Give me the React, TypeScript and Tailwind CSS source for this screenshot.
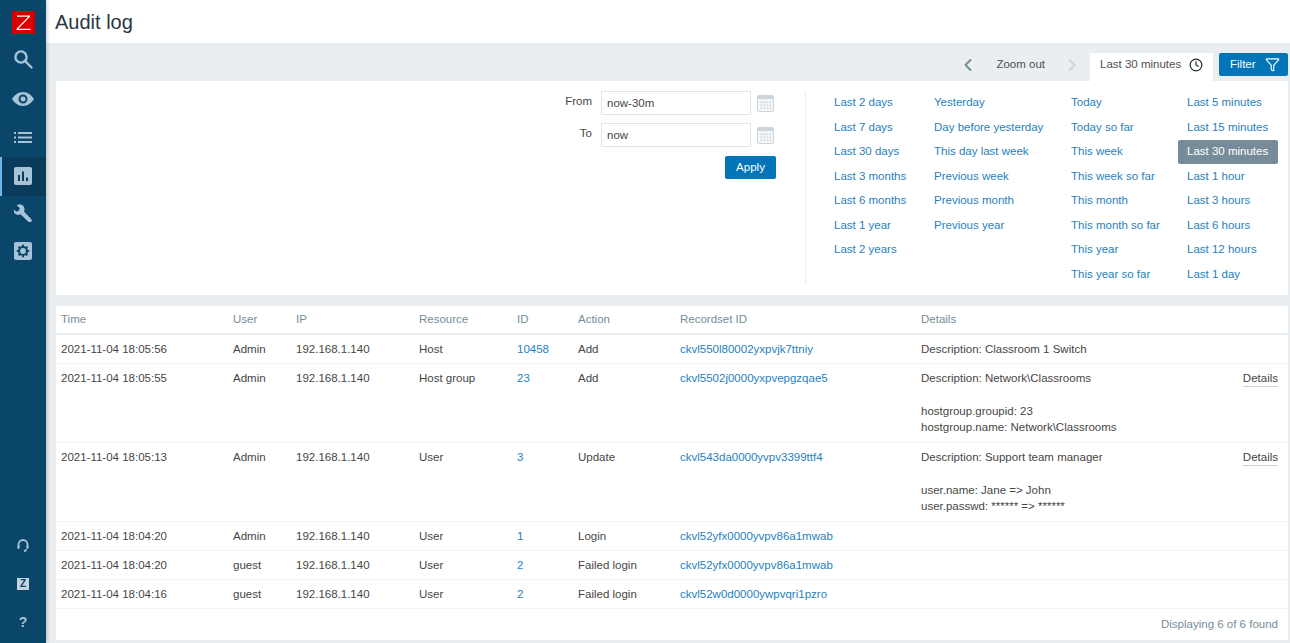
import { ChevronLeft, ChevronRight, Clock, Filter } from "lucide-react";

const columns = [
  ["Last 2 days", "Last 7 days", "Last 30 days", "Last 3 months", "Last 6 months", "Last 1 year", "Last 2 years"],
  ["Yesterday", "Day before yesterday", "This day last week", "Previous week", "Previous month", "Previous year"],
  ["Today", "Today so far", "This week", "This week so far", "This month", "This month so far", "This year", "This year so far"],
  ["Last 5 minutes", "Last 15 minutes", "Last 30 minutes", "Last 1 hour", "Last 3 hours", "Last 6 hours", "Last 12 hours", "Last 1 day"],
];

const columnClasses = ["w-[100px]", "w-[137px]", "w-[116px]", "w-[100px]"];

const rows = [
  { time: "2021-11-04 18:05:56", user: "Admin", ip: "192.168.1.140", resource: "Host", id: "10458", action: "Add", recordset: "ckvl550l80002yxpvjk7ttniy", desc: "Description: Classroom 1 Switch" },
  { time: "2021-11-04 18:05:55", user: "Admin", ip: "192.168.1.140", resource: "Host group", id: "23", action: "Add", recordset: "ckvl5502j0000yxpvepgzqae5", desc: "Description: Network\\Classrooms", extra: ["hostgroup.groupid: 23", "hostgroup.name: Network\\Classrooms"] },
  { time: "2021-11-04 18:05:13", user: "Admin", ip: "192.168.1.140", resource: "User", id: "3", action: "Update", recordset: "ckvl543da0000yvpv3399ttf4", desc: "Description: Support team manager", extra: ["user.name: Jane => John", "user.passwd: ****** => ******"] },
  { time: "2021-11-04 18:04:20", user: "Admin", ip: "192.168.1.140", resource: "User", id: "1", action: "Login", recordset: "ckvl52yfx0000yvpv86a1mwab" },
  { time: "2021-11-04 18:04:20", user: "guest", ip: "192.168.1.140", resource: "User", id: "2", action: "Failed login", recordset: "ckvl52yfx0000yvpv86a1mwab" },
  { time: "2021-11-04 18:04:16", user: "guest", ip: "192.168.1.140", resource: "User", id: "2", action: "Failed login", recordset: "ckvl52w0d0000ywpvqri1pzro" },
];

const gridCols = "grid grid-cols-[172px_63px_123px_98px_61px_102px_241px_1fr]";

const CalendarIcon = () => (
  <svg width="17" height="17" viewBox="0 0 17 17">
    <rect x="0.5" y="0.5" width="16" height="16" rx="1" fill="#f4f5f6" stroke="#ccd5db" />
    <rect x="1" y="1" width="15" height="3" fill="#ccd5db" />
    {[4, 7, 10, 13].map((x) =>
      [7, 10, 13].map((y) => <rect key={`${x}-${y}`} x={x - 0.5} y={y - 0.5} width="1.5" height="1.5" fill="#ccd5db" />)
    )}
  </svg>
);

const NavIcon = ({ children, active, className = "" }: { children: React.ReactNode; active?: boolean; className?: string }) => (
  <div className={`relative h-[38px] flex items-center justify-center ${active ? "bg-[#0a3b5a]" : ""} ${className}`}>
    {active && <div className="absolute left-0 top-0 bottom-0 w-[2px] bg-[#69b9f0]" />}
    {children}
  </div>
);

const Sidebar = () => (
  <aside className="w-[46px] shrink-0 h-[643px] bg-[#0a466a] flex flex-col pb-[2px] shadow-[2px_0_3px_rgba(0,0,0,0.15)] z-10">
    <div className="h-[40px] flex items-end justify-center pb-[6px]">
      <svg width="23" height="23" viewBox="0 0 23 23">
        <rect width="23" height="23" fill="#d40000" />
        <path d="M5 4.500h13v1.200L6.300 17.800H18.500v1.200H4.500v-1.200L16.200 5.700H5z" fill="#ffffff" />
      </svg>
    </div>
    <NavIcon className="mb-[2px]">
      <svg width="20" height="20" viewBox="0 0 20 20" fill="none" stroke="#a7c3d6" strokeWidth="2.400">
        <circle cx="8" cy="8" r="5.600" />
        <path d="M12.200 12.200L18.500 18.500" strokeLinecap="round" />
      </svg>
    </NavIcon>
    <NavIcon>
      <svg width="22" height="14" viewBox="0 0 22 14">
        <path fillRule="evenodd" d="M11 0c5 0 9 3.500 11 7-2 3.500-6 7-11 7S2 10.500 0 7c2-3.500 6-7 11-7zm0 2.500a4.500 4.500 0 100 9 4.500 4.500 0 000-9zm0 2a2.500 2.500 0 110 5 2.500 2.500 0 010-5z" fill="#a7c3d6" />
      </svg>
    </NavIcon>
    <NavIcon>
      <svg width="18" height="11" viewBox="0 0 18 11" fill="#a7c3d6">
        <rect x="0" y="0" width="2" height="2" />
        <rect x="0" y="4.500" width="2" height="2" />
        <rect x="0" y="9" width="2" height="2" />
        <rect x="4" y="0" width="14" height="2" />
        <rect x="4" y="4.500" width="14" height="2" />
        <rect x="4" y="9" width="14" height="2" />
      </svg>
    </NavIcon>
    <NavIcon active className="!h-[39px] mt-[1px] -mb-[1px] pb-[2px]">
      <svg width="18" height="18" viewBox="0 0 18 18">
        <rect width="18" height="18" rx="2" fill="#a7c3d6" />
        <rect x="4" y="8" width="2" height="6" fill="#0a3b5a" />
        <rect x="8" y="4.500" width="2" height="9.500" fill="#0a3b5a" />
        <rect x="12" y="10.500" width="2" height="3.500" fill="#0a3b5a" />
      </svg>
    </NavIcon>
    <NavIcon className="mt-[-1px]">
      <svg width="18" height="18" viewBox="0 0 18 18" fill="#a7c3d6">
        <path d="M6 0.300a5 5 0 00-3.200 1l3 3-1 2.500-2.500 1-3-3A5 5 0 006.500 10.300L14.300 17.700a1.800 1.800 0 002.900-2.600L10 7.500A5 5 0 006 0.300z" />
      </svg>
    </NavIcon>
    <NavIcon>
      <svg width="18" height="18" viewBox="0 0 18 18">
        <rect width="18" height="18" rx="2" fill="#a7c3d6" />
        <circle cx="9" cy="9" r="4" fill="none" stroke="#0a466a" strokeWidth="2.200" />
        <path d="M9 2.800v2M9 13.200v2M2.800 9h2M13.200 9h2M4.600 4.600l1.500 1.500M11.900 11.900l1.500 1.500M4.600 13.400l1.500-1.500M11.900 6.100l1.500-1.500" stroke="#0a466a" strokeWidth="2" />
      </svg>
    </NavIcon>
    <div className="flex-1" />
    <NavIcon className="pb-[2px]">
      <svg width="12" height="13" viewBox="0 0 12 13" fill="none" stroke="#a7c3d6" strokeWidth="1.800">
        <path d="M1.500 8V5.500a4.500 4.500 0 019 0V8" />
        <rect x="0.500" y="6.500" width="2" height="3.500" rx="0.800" fill="#a7c3d6" stroke="none" />
        <rect x="9.500" y="6.500" width="2" height="3.500" rx="0.800" fill="#a7c3d6" stroke="none" />
        <path d="M9.500 10.500c-.5 1-1.500 1.500-2.500 1.500" />
      </svg>
    </NavIcon>
    <NavIcon>
      <div className="w-[12px] h-[12px] bg-[#c3d4e0] text-[#0a466a] text-[10px] font-bold leading-[12px] text-center">Z</div>
    </NavIcon>
    <NavIcon>
      <span className="text-[#a7c3d6] text-[14px] font-bold">?</span>
    </NavIcon>
  </aside>
);

export default function App() {
  return (
    <div className="flex w-[1290px] h-[643px] overflow-hidden bg-[#ebeef0] text-[11.5px] text-[#464646] font-['Liberation_Sans',Arial,sans-serif]">
      <Sidebar />
      <main className="flex-1 min-w-0 flex flex-col">
        <header className="h-[43px] bg-white pl-[9px] flex items-center">
          <h1 className="text-[20px] text-[#2a3640] font-normal">Audit log</h1>
        </header>

        <div className="h-[38px] flex items-end justify-end pr-[2px]">
          <div className="flex items-start h-[28px] text-[#4f4f4f]">
            <div className="flex items-center h-[23px]">
              <ChevronLeft size={20} strokeWidth={2.500} className="text-[#768d99] mr-[18px]" />
              <span>Zoom out</span>
              <ChevronRight size={20} strokeWidth={2.500} className="text-[#cdd5da] ml-[17px] mr-[8px]" />
            </div>
            <div className="h-[28px] w-[123px] bg-white pl-[10px] mr-[6px]">
              <div className="h-[23px] flex items-center gap-[8px]">
                <span>Last 30 minutes</span>
                <Clock size={14} strokeWidth={2} className="text-[#1f2c33]" />
              </div>
            </div>
            <button className="h-[23px] w-[69px] bg-[#0275b8] text-white rounded-[2px] flex items-center pl-[11px] gap-[9px]">
              Filter
              <Filter size={15} strokeWidth={1.800} />
            </button>
          </div>
        </div>

        <section className="ml-[10px] mr-[2px] h-[214px] bg-white flex shrink-0">
          <div className="flex-1 flex justify-end">
            <div className="w-[240px] mr-[9px] pt-[10px]">
              <div className="flex items-center h-[24px] mb-[8px]">
                <label className="w-[36px] text-right mr-[9px] relative top-[-1px]">From</label>
                <div className="w-[150px] h-[24px] border border-[#dfe4e7] pl-[5px] leading-[22px] bg-white">now-30m</div>
                <div className="ml-[6px]"><CalendarIcon /></div>
              </div>
              <div className="flex items-center h-[24px]">
                <label className="w-[36px] text-right mr-[9px] relative top-[-1px]">To</label>
                <div className="w-[150px] h-[24px] border border-[#dfe4e7] pl-[5px] leading-[22px] bg-white">now</div>
                <div className="ml-[6px]"><CalendarIcon /></div>
              </div>
              <div className="flex justify-end mt-[9px] pr-[20px]">
                <button className="w-[51px] h-[23px] rounded-[2px] bg-[#0275b8] text-white">Apply</button>
              </div>
            </div>
          </div>
          <div className="w-[483px] mt-[10px] mb-[11px] border-l border-[#ebeef0] pl-[28px] flex">
            {columns.map((items, i) => (
              <ul key={i} className={columnClasses[i]}>
                {items.map((item) => (
                  <li key={item} className="h-[24.500px] leading-[22px]">
                    {item === "Last 30 minutes" ? (
                      <span className="inline-block -ml-[9px] w-[100px] h-[24px] pl-[9px] leading-[23px] rounded-[2px] bg-[#768d99] text-white">{item}</span>
                    ) : (
                      <span className="text-[#1f7fc0]">{item}</span>
                    )}
                  </li>
                ))}
              </ul>
            ))}
          </div>
        </section>

        <section className="ml-[10px] mr-[2px] mt-[11px] h-[334px] bg-white shrink-0">
          <div className={`${gridCols} h-[29px] border-b-2 border-[#ebeef0] text-[#768d99] items-center`}>
            {["Time", "User", "IP", "Resource", "ID", "Action", "Recordset ID", "Details"].map((h) => (
              <div key={h} className="pl-[5px]">{h}</div>
            ))}
          </div>
          {rows.map((row, i) => (
            <div key={i} className={`${gridCols} border-b border-[#f3f5f6] pt-[6px] ${row.extra ? "pb-[7px]" : "pb-[6px]"} leading-[16px]`}>
              <div className="pl-[5px]">{row.time}</div>
              <div className="pl-[5px]">{row.user}</div>
              <div className="pl-[5px]">{row.ip}</div>
              <div className="pl-[5px]">{row.resource}</div>
              <div className="pl-[5px] text-[#1f7fc0]">{row.id}</div>
              <div className="pl-[5px]">{row.action}</div>
              <div className="pl-[5px] text-[#1f7fc0]">{row.recordset}</div>
              <div className="pl-[5px] pr-[10px]">
                <div className="flex justify-between h-[16px]">
                  <span>{row.desc}</span>
                  {row.extra && <span className="border-b border-[#c9d2d8] h-[17px]">Details</span>}
                </div>
                {row.extra && (
                  <div className="mt-[17px]">
                    {row.extra.map((line) => (
                      <div key={line}>{line}</div>
                    ))}
                  </div>
                )}
              </div>
            </div>
          ))}
          <div className="text-right pr-[10px] pt-[7px] text-[#768d99]">Displaying 6 of 6 found</div>
        </section>
      </main>
    </div>
  );
}
